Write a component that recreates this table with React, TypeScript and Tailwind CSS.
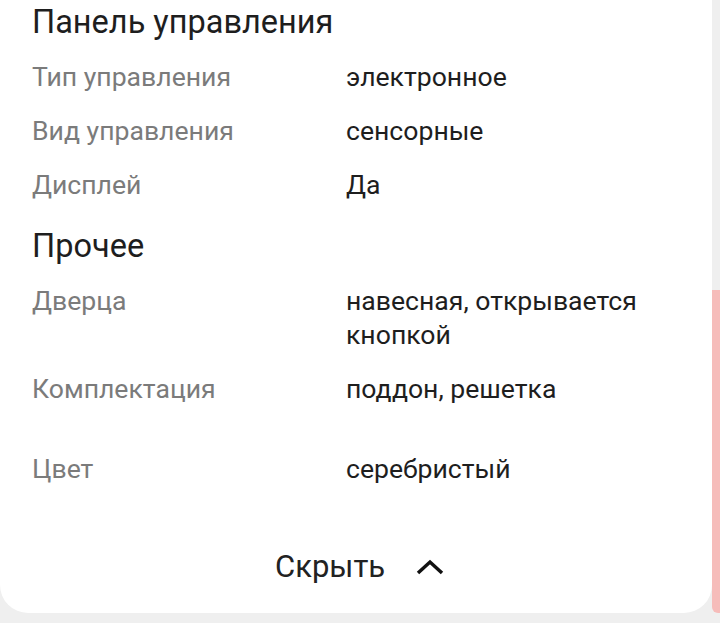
import React from 'react';

type Row = { label: string; value: string; extra?: string };

const sections: { title: string; rows: Row[] }[] = [
  {
    title: 'Панель управления',
    rows: [
      { label: 'Тип управления', value: 'электронное' },
      { label: 'Вид управления', value: 'сенсорные' },
      { label: 'Дисплей', value: 'Да' },
    ],
  },
  {
    title: 'Прочее',
    rows: [
      { label: 'Дверца', value: 'навесная, открывается кнопкой' },
      { label: 'Комплектация', value: 'поддон, решетка', extra: 'mb-[26px]' },
      { label: 'Цвет', value: 'серебристый' },
    ],
  },
];

const App = () => {
  return (
    <div
      className="flex h-[623px] w-[720px] overflow-hidden bg-[#efefef]"
      style={{ fontFamily: 'Roboto, "Noto Sans", sans-serif' }}
    >
      <div className="flex h-[613px] w-[712px] flex-col rounded-b-[28px] bg-white pl-[32px]">
        {sections.map((section, i) => (
          <div key={section.title} className={i === 0 ? 'pt-[2px]' : 'mt-[24px]'}>
            <h2 className="text-[32.5px] leading-[40px] text-[#1e1e1e]">{section.title}</h2>
            <div className="mt-[18px] flex flex-col gap-[20px]">
              {section.rows.map((row) => (
                <div key={row.label} className={`flex text-[26.6px] leading-[34px] ${row.extra || ''}`}>
                  <span className="w-[314px] shrink-0 text-[#7b7b7b]">{row.label}</span>
                  <span className="w-[320px] text-[#1e1e1e]">{row.value}</span>
                </div>
              ))}
            </div>
          </div>
        ))}
        <button className="ml-[243px] mt-[61px] flex items-center self-start text-[31px] leading-[40px] text-[#222]">
          <span>Скрыть</span>
          <svg width="30" height="18" viewBox="0 0 30 18" className="ml-[30px]">
            <path d="M3 15 L15 4 L27 15" fill="none" stroke="#111" strokeWidth="3.5" />
          </svg>
        </button>
      </div>
      <div className="mt-[290px] h-[323px] w-[8px] rounded-bl-[6px] bg-[#f6bcba]" />
    </div>
  );
};

export default App;
